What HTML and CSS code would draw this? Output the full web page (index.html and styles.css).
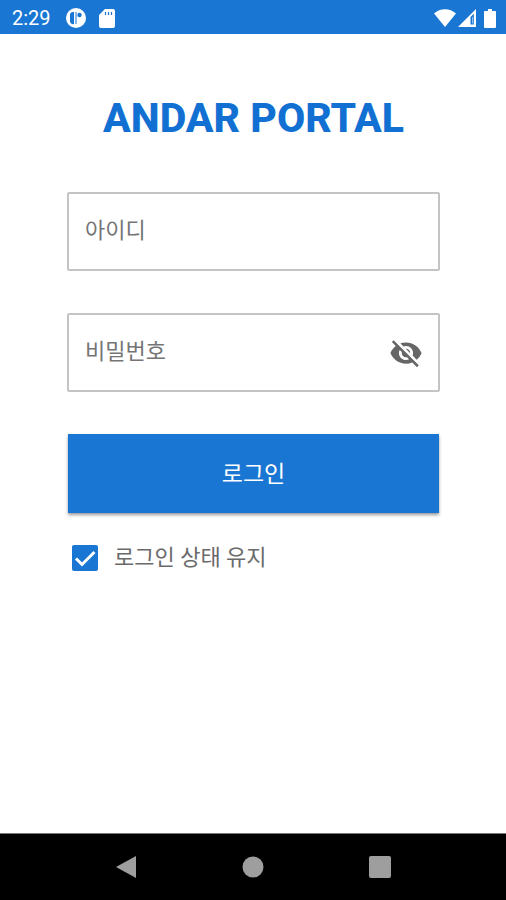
FILE: index.html
```html
<!DOCTYPE html>
<html lang="ko">
<head>
<meta charset="utf-8">
<meta name="viewport" content="width=device-width, initial-scale=1">
<title>ANDAR PORTAL</title>
<link rel="stylesheet" href="styles.css">
</head>
<body>
<header class="status">
  <span class="clock">2:29</span>
  <svg class="app-icon" width="20" height="20" viewBox="0 0 20 20" aria-hidden="true">
    <circle cx="10" cy="10" r="10" fill="#fff"/>
    <path d="M8 4H7a3 3 0 0 0-3 3v6.500a3 3 0 0 0 4 2.500z" fill="#1976d2"/>
    <path d="M10 4v12" stroke="#1976d2" stroke-width="1"/>
    <circle cx="13.500" cy="7" r="2.200" fill="#1976d2"/>
  </svg>
  <svg width="16" height="19" viewBox="0 0 16 19" aria-hidden="true">
    <path d="M6 0h8a2 2 0 0 1 2 2v15a2 2 0 0 1-2 2H2a2 2 0 0 1-2-2V6z" fill="#fff"/>
    <path d="M6.500 3v3M9.500 3v3M12.500 3v3" stroke="#1976d2" stroke-width="1.200"/>
  </svg>
  <div class="signals">
    <svg width="22" height="18" viewBox="0 0 22 18" aria-hidden="true">
      <path d="M0 4.500C6-1.300 16-1.300 22 4.500L11 18z" fill="#fff"/>
    </svg>
    <svg width="18" height="18" viewBox="0 0 18 18" aria-hidden="true">
      <path d="M18 0v18H0z" fill="#fff"/>
      <path d="M12.500 8l3.300-3.300v10.800h-3.300z" fill="#1976d2"/>
      <path d="M14.500 8v6.500" stroke="#8fbdec" stroke-width="1"/>
    </svg>
    <svg class="battery" width="12" height="19" viewBox="0 0 12 19" aria-hidden="true">
      <path d="M4 0h4v2h3a1 1 0 0 1 1 1v15a1 1 0 0 1-1 1H1a1 1 0 0 1-1-1V3a1 1 0 0 1 1-1h3z" fill="#fff"/>
    </svg>
  </div>
</header>
<main class="login">
  <h1 class="title">ANDAR PORTAL</h1>
  <form class="form">
    <div class="field">
      <input class="field-input" type="text" placeholder="아이디" aria-label="아이디">
    </div>
    <div class="field">
      <input class="field-input" type="password" placeholder="비밀번호" aria-label="비밀번호">
      <button class="toggle" type="button" aria-label="비밀번호 표시">
        <svg width="34" height="34" viewBox="0 0 24 24" aria-hidden="true">
          <path fill="#666" d="M12 7c2.760 0 5 2.240 5 5 0 .650-.130 1.260-.360 1.830l2.920 2.920c1.510-1.260 2.700-2.890 3.430-4.750-1.730-4.390-6-7.500-11-7.500-1.400 0-2.740.250-3.980.700l2.160 2.160C10.740 7.130 11.350 7 12 7zM2 4.270l2.280 2.280.460.460C3.080 8.300 1.780 10.020 1 12c1.730 4.390 6 7.500 11 7.500 1.550 0 3.030-.300 4.380-.840l.420.420L19.730 22 21 20.730 3.270 3 2 4.270zM7.530 9.800l1.550 1.550c-.050.210-.080.430-.080.650 0 1.660 1.340 3 3 3 .220 0 .440-.030.650-.080l1.550 1.550c-.670.330-1.410.530-2.200.530-2.760 0-5-2.240-5-5 0-.790.200-1.530.530-2.200zm4.310-.780l3.150 3.150.020-.160c0-1.660-1.340-3-3-3l-.170.010z"/>
        </svg>
      </button>
    </div>
    <button class="submit" type="button">로그인</button>
    <label class="remember">
      <input class="remember-box" type="checkbox" checked>
      <svg class="remember-mark" width="26" height="26" viewBox="0 0 26 26" aria-hidden="true">
        <rect width="26" height="26" rx="2" fill="#1976d2"/>
        <path class="tick" d="M4 13.500l6 6L22.500 7" fill="none" stroke="#fff" stroke-width="3"/>
      </svg>
      <span>로그인 상태 유지</span>
    </label>
  </form>
</main>
<nav class="navbar" aria-label="시스템">
  <button class="nav-button" type="button" aria-label="뒤로">
    <svg width="22" height="24" viewBox="0 0 22 24" aria-hidden="true"><path d="M21 1v22L1 12z" fill="#9e9e9e"/></svg>
  </button>
  <button class="nav-button" type="button" aria-label="홈">
    <svg width="22" height="22" viewBox="0 0 22 22" aria-hidden="true"><circle cx="11" cy="11" r="10.500" fill="#9e9e9e"/></svg>
  </button>
  <button class="nav-button" type="button" aria-label="최근 앱">
    <svg width="22" height="22" viewBox="0 0 22 22" aria-hidden="true"><rect width="22" height="22" rx="2" fill="#9e9e9e"/></svg>
  </button>
</nav>
</body>
</html>
```
FILE: styles.css
```css
* {
  box-sizing: border-box;
}

body {
  margin: 0;
  min-height: 100vh;
  display: flex;
  flex-direction: column;
  background: #fff;
  font-family: Roboto, "Noto Sans CJK KR", sans-serif;
}

svg {
  display: block;
}

button {
  border: 0;
  padding: 0;
  background: none;
  font: inherit;
}

.status {
  display: flex;
  align-items: center;
  height: 34px;
  padding: 2px 10px 0 12px;
  gap: 15px;
  background: #1976d2;
  color: #fff;
}

.clock {
  font-size: 20px;
  line-height: 24px;
}

.app-icon {
  margin-right: -2px;
}

.signals {
  display: flex;
  align-items: center;
  gap: 2px;
  margin-left: auto;
}

.battery {
  margin-left: 6px;
}

.login {
  flex: 1;
  padding: 58px 66px 0 67px;
}

.title {
  margin: 0 0 48px;
  font-size: 41px;
  line-height: 52px;
  font-weight: 800;
  text-align: center;
  white-space: nowrap;
  color: #1270d2;
}

.form {
  display: flex;
  flex-direction: column;
}

.field {
  display: flex;
  align-items: center;
  height: 79px;
  margin-bottom: 42px;
  padding: 0 15px 0 16px;
  border: 2px solid #c4c4c4;
  border-radius: 2px;
}

.field-input {
  flex: 1;
  min-width: 0;
  padding: 0 0 2px;
  border: 0;
  outline: 0;
  background: none;
  color: #333;
  font: 400 22px/32px Roboto, "Noto Sans CJK KR", sans-serif;
}

.field-input::placeholder {
  color: #757575;
  opacity: 1;
}

.submit {
  height: 79px;
  margin: 0 1px;
  padding-top: 2px;
  background: #1976d2;
  color: #fff;
  font-size: 23px;
  line-height: 32px;
  box-shadow: 0 2px 3px rgba(0, 0, 0, 0.4);
}

.remember {
  display: flex;
  align-items: center;
  gap: 16px;
  margin-top: 29px;
  padding-left: 5px;
  color: #6a6a6a;
  font-size: 22px;
  line-height: 32px;
}

.remember-box {
  position: absolute;
  width: 26px;
  height: 26px;
  margin: 0;
  opacity: 0;
}

.remember-box:not(:checked) + .remember-mark .tick {
  visibility: hidden;
}

.navbar {
  display: grid;
  grid-template-columns: repeat(3, 127px);
  justify-content: center;
  height: 67px;
  border-top: 1px solid #777;
  background: #000;
}

.nav-button {
  display: flex;
  align-items: center;
  justify-content: center;
}
```
